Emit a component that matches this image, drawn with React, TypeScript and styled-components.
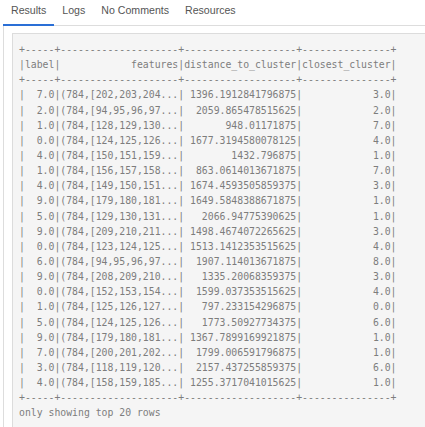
import React from "react";
import styled, { createGlobalStyle } from "styled-components";

const Global = createGlobalStyle`
  html, body { margin: 0; padding: 0; background: #fff; overflow: hidden; }
  body { font-family: "Liberation Sans", Arial, sans-serif; }
`;

const Page = styled.div`
  padding: 0 0 0 3px;
  width: 600px;
`;

const TabBar = styled.div`
  display: flex;
  border-bottom: 1px solid #dddddd;
  height: 26px;
  box-sizing: border-box;
`;

const Tab = styled.div<{ $active?: boolean }>`
  padding: 2px 8px 0;
  font-size: 10.6px;
  line-height: 16px;
  color: #555;
  box-sizing: border-box;
  border-bottom: 2px solid ${(p) => (p.$active ? "#2a6fd6" : "transparent")};
  margin-bottom: -1px;
`;

const Panel = styled.div`
  border-left: 1px solid #dddddd;
  padding: 7px 0 0 8px;
  height: 420px;
`;

const Output = styled.pre`
  margin: 0;
  background: #f5f5f5;
  border: 1px solid #dcdcdc;
  padding: 8px 7px 7px 6px;
  font-family: "DejaVu Sans Mono", Menlo, monospace;
  font-size: 9.8px;
  line-height: 15.14px;
  color: #7d7d7d;
  height: 420px;
`;

const rows: [string, string, string, string][] = [
  ["7.0", "(784,[202,203,204...", "1396.1912841796875", "3.0"],
  ["2.0", "(784,[94,95,96,97...", "2059.865478515625", "2.0"],
  ["1.0", "(784,[128,129,130...", "948.01171875", "7.0"],
  ["0.0", "(784,[124,125,126...", "1677.3194580078125", "4.0"],
  ["4.0", "(784,[150,151,159...", "1432.796875", "1.0"],
  ["1.0", "(784,[156,157,158...", "863.0614013671875", "7.0"],
  ["4.0", "(784,[149,150,151...", "1674.4593505859375", "3.0"],
  ["9.0", "(784,[179,180,181...", "1649.5848388671875", "1.0"],
  ["5.0", "(784,[129,130,131...", "2066.94775390625", "1.0"],
  ["9.0", "(784,[209,210,211...", "1498.4674072265625", "3.0"],
  ["0.0", "(784,[123,124,125...", "1513.1412353515625", "4.0"],
  ["6.0", "(784,[94,95,96,97...", "1907.114013671875", "8.0"],
  ["9.0", "(784,[208,209,210...", "1335.20068359375", "3.0"],
  ["0.0", "(784,[152,153,154...", "1599.037353515625", "4.0"],
  ["1.0", "(784,[125,126,127...", "797.233154296875", "0.0"],
  ["5.0", "(784,[124,125,126...", "1773.50927734375", "6.0"],
  ["9.0", "(784,[179,180,181...", "1367.7899169921875", "1.0"],
  ["7.0", "(784,[200,201,202...", "1799.006591796875", "1.0"],
  ["3.0", "(784,[118,119,120...", "2157.437255859375", "6.0"],
  ["4.0", "(784,[158,159,185...", "1255.3717041015625", "1.0"],
];

const widths = [5, 20, 19, 15];
const pad = (s: string, w: number) => s.padStart(w, " ");
const border = "+" + widths.map((w) => "-".repeat(w)).join("+") + "+";
const line = (cells: string[]) =>
  "|" + cells.map((c, i) => pad(c, widths[i])).join("|") + "|";

const text = [
  border,
  line(["label", "features", "distance_to_cluster", "closest_cluster"]),
  border,
  ...rows.map((r) => line(r)),
  border,
  "only showing top 20 rows",
].join("\n");

export default function App() {
  return (
    <Page>
      <Global />
      <TabBar>
        <Tab $active>Results</Tab>
        <Tab>Logs</Tab>
        <Tab>No Comments</Tab>
        <Tab>Resources</Tab>
      </TabBar>
      <Panel>
        <Output>{text}</Output>
      </Panel>
    </Page>
  );
}
